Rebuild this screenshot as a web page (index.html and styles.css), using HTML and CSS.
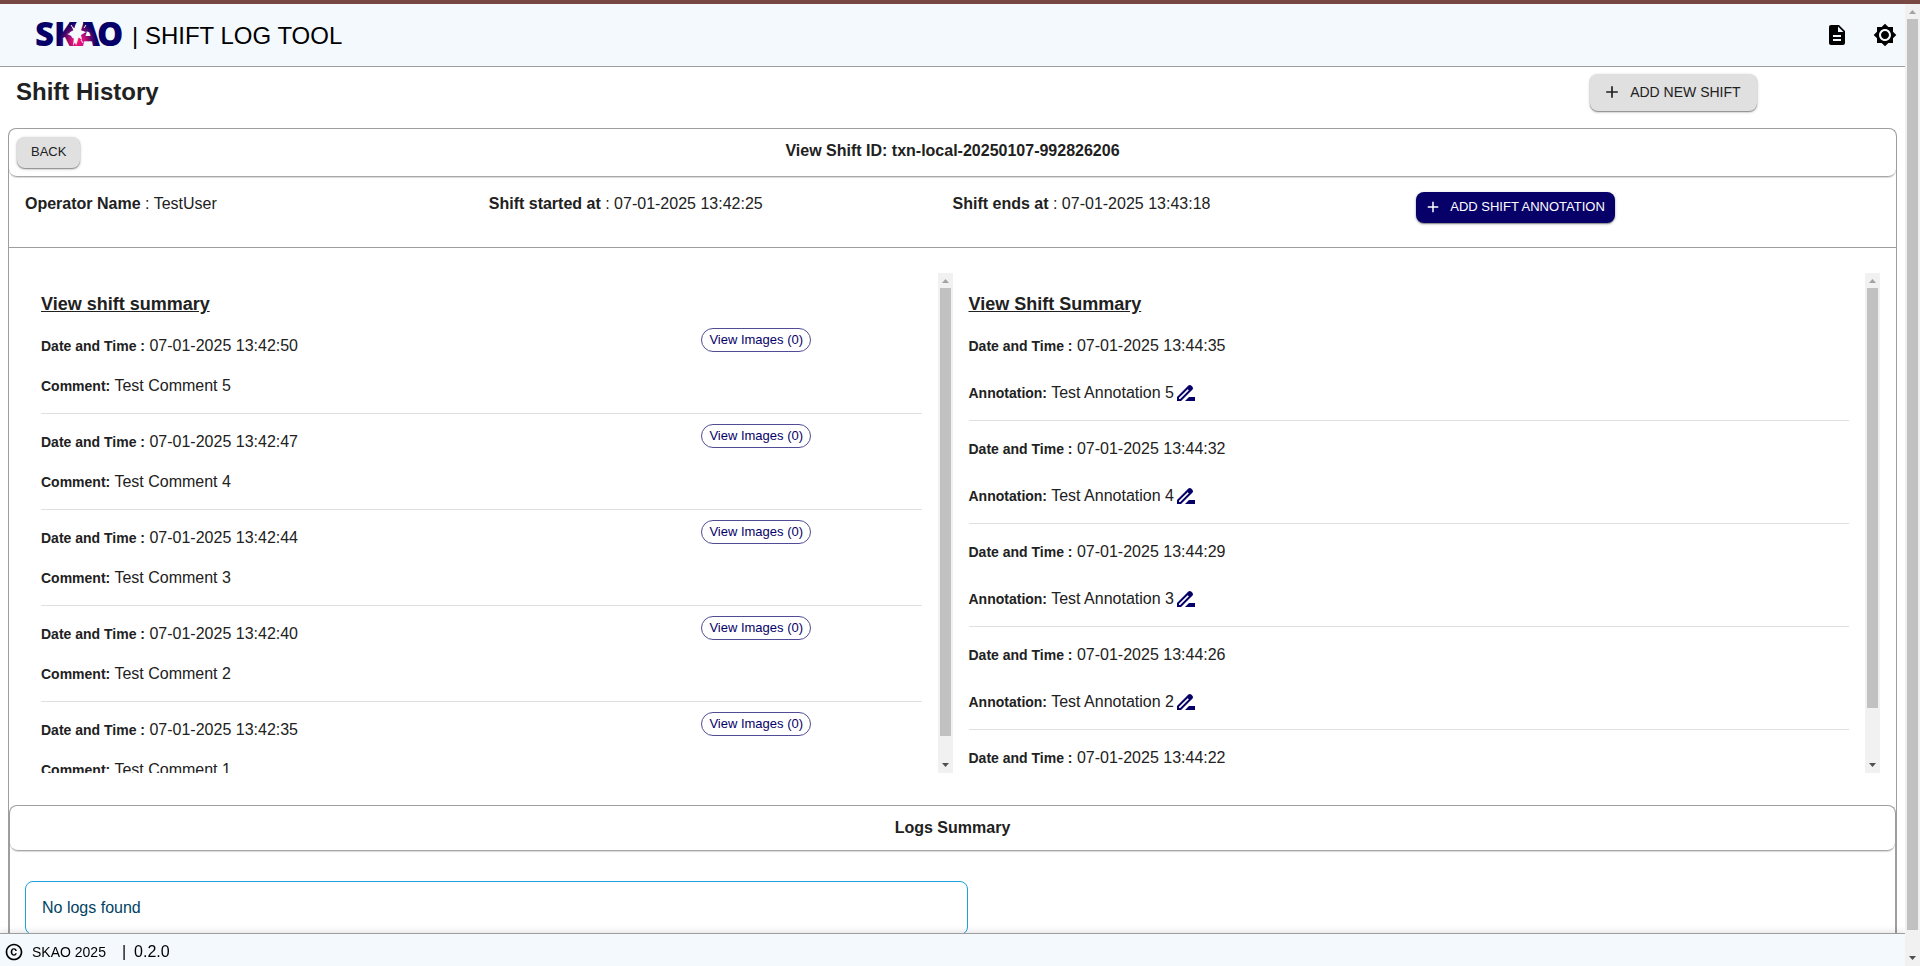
FILE: index.html
```html
<!DOCTYPE html>
<html lang="en">
<head>
<meta charset="utf-8">
<title>Shift Log Tool</title>
<link rel="stylesheet" href="styles.css">
</head>
<body>
<div class="accent"></div>
<div class="scroll-frame page">
  <div class="scroller">
    <header class="header">
      <svg class="logo" viewBox="0 0 88 26" role="img" aria-label="SKAO">
        <defs>
          <radialGradient id="burst" gradientUnits="userSpaceOnUse" cx="43" cy="20" r="19">
            <stop offset="0" stop-color="#fa1480"/>
            <stop offset="0.35" stop-color="#d50f76"/>
            <stop offset="0.7" stop-color="#5a0a6c"/>
            <stop offset="1" stop-color="#070068"/>
          </radialGradient>
        </defs>
        <g class="logo-text">
          <text x="0" y="25">S</text>
          <text x="19" y="25" fill="url(#burst)">K</text>
          <text x="41" y="25" fill="url(#burst)">A</text>
          <text x="62" y="25">O</text>
        </g>
        <path fill="url(#burst)" d="M35 1h6l-2 8-8 4zM48 1h6l4 12-7-3zM32 15l8 3-1 7h-3zM44 17l5 2-5 6h-2z"/>
        <path fill="#f4f9fd" d="M44 0l1 9 6 2-5 3 1 5-4-3-5 9 1-9-7-3 7-2-2-5 4 2z"/>
        <path stroke="#f4f9fd" fill="none" d="M36 4l2 3M51 4l-2 3M46 19l2 3"/>
      </svg>
      <span class="app-title">| SHIFT LOG TOOL</span>
      <nav class="header-actions">
        <button class="icon-button" aria-label="Documentation">
          <svg viewBox="0 0 24 24"><path d="M14 2H6c-1.100 0-1.990.9-1.990 2L4 20c0 1.100.89 2 1.990 2H18c1.100 0 2-.9 2-2V8l-6-6zm2 16H8v-2h8v2zm0-4H8v-2h8v2zm-3-5V3.500L18.500 9H13z"/></svg>
        </button>
        <button class="icon-button" aria-label="Toggle theme">
          <svg viewBox="0 0 24 24"><path d="M20 8.690V4h-4.690L12 .69 8.690 4H4v4.690L.69 12 4 15.310V20h4.690L12 23.310 15.310 20H20v-4.690L23.310 12 20 8.690zM12 18c-3.310 0-6-2.690-6-6s2.690-6 6-6 6 2.690 6 6-2.690 6-6 6zm0-10c-2.210 0-4 1.790-4 4s1.790 4 4 4 4-1.790 4-4-1.790-4-4-4z"/></svg>
        </button>
      </nav>
    </header>

    <main class="main">
      <div class="title-row">
        <h1>Shift History</h1>
        <div class="title-action">
          <button class="button button-large">
            <svg viewBox="0 0 24 24"><path d="M19 13h-6v6h-2v-6H5v-2h6V5h2v6h6v2z"/></svg>ADD NEW SHIFT</button>
        </div>
      </div>

      <section class="card">
        <div class="card-header">
          <button class="button">BACK</button>
          <h2>View Shift ID: txn-local-20250107-992826206</h2>
        </div>
        <div class="details">
          <p><b>Operator Name</b> : TestUser</p>
          <p><b>Shift started at</b> : 07-01-2025 13:42:25</p>
          <p><b>Shift ends at</b> : 07-01-2025 13:43:18</p>
          <div class="details-action">
            <button class="button button-primary">
              <svg viewBox="0 0 24 24"><path d="M19 13h-6v6h-2v-6H5v-2h6V5h2v6h6v2z"/></svg>ADD SHIFT ANNOTATION</button>
          </div>
        </div>

        <div class="panels">
          <section class="scroll-frame panel">
            <div class="scroller">
              <h3>View shift summary</h3>
              <article class="comment">
                <div class="comment-text"><p><b>Date and Time :</b> 07-01-2025 13:42:50</p><p><b>Comment:</b> Test Comment 5</p></div>
                <button class="chip">View Images (0)</button>
              </article>
              <article class="comment">
                <div class="comment-text"><p><b>Date and Time :</b> 07-01-2025 13:42:47</p><p><b>Comment:</b> Test Comment 4</p></div>
                <button class="chip">View Images (0)</button>
              </article>
              <article class="comment">
                <div class="comment-text"><p><b>Date and Time :</b> 07-01-2025 13:42:44</p><p><b>Comment:</b> Test Comment 3</p></div>
                <button class="chip">View Images (0)</button>
              </article>
              <article class="comment">
                <div class="comment-text"><p><b>Date and Time :</b> 07-01-2025 13:42:40</p><p><b>Comment:</b> Test Comment 2</p></div>
                <button class="chip">View Images (0)</button>
              </article>
              <article class="comment">
                <div class="comment-text"><p><b>Date and Time :</b> 07-01-2025 13:42:35</p><p><b>Comment:</b> Test Comment 1</p></div>
                <button class="chip">View Images (0)</button>
              </article>
            </div>
            <div class="scrollbar" aria-hidden="true">
              <svg viewBox="0 0 15 15"><use href="#arrow-up"/></svg>
              <div class="track"><div class="thumb" style="height: 95.3%"></div></div>
              <svg viewBox="0 0 15 15"><use href="#arrow-down"/></svg>
            </div>
          </section>

          <section class="scroll-frame panel">
            <div class="scroller">
              <h3>View Shift Summary</h3>
              <article class="annotation">
                <p><b>Date and Time :</b> 07-01-2025 13:44:35</p>
                <div class="annotation-row"><p><b>Annotation:</b> Test Annotation 5</p><button class="edit" aria-label="Edit annotation 5"><svg viewBox="0 0 24 24"><use href="#pencil"/></svg></button></div>
              </article>
              <article class="annotation">
                <p><b>Date and Time :</b> 07-01-2025 13:44:32</p>
                <div class="annotation-row"><p><b>Annotation:</b> Test Annotation 4</p><button class="edit" aria-label="Edit annotation 4"><svg viewBox="0 0 24 24"><use href="#pencil"/></svg></button></div>
              </article>
              <article class="annotation">
                <p><b>Date and Time :</b> 07-01-2025 13:44:29</p>
                <div class="annotation-row"><p><b>Annotation:</b> Test Annotation 3</p><button class="edit" aria-label="Edit annotation 3"><svg viewBox="0 0 24 24"><use href="#pencil"/></svg></button></div>
              </article>
              <article class="annotation">
                <p><b>Date and Time :</b> 07-01-2025 13:44:26</p>
                <div class="annotation-row"><p><b>Annotation:</b> Test Annotation 2</p><button class="edit" aria-label="Edit annotation 2"><svg viewBox="0 0 24 24"><use href="#pencil"/></svg></button></div>
              </article>
              <article class="annotation">
                <p><b>Date and Time :</b> 07-01-2025 13:44:22</p>
                <div class="annotation-row"><p><b>Annotation:</b> Test Annotation 1</p><button class="edit" aria-label="Edit annotation 1"><svg viewBox="0 0 24 24"><use href="#pencil"/></svg></button></div>
              </article>
            </div>
            <div class="scrollbar" aria-hidden="true">
              <svg viewBox="0 0 15 15"><use href="#arrow-up"/></svg>
              <div class="track"><div class="thumb" style="height: 89.3%"></div></div>
              <svg viewBox="0 0 15 15"><use href="#arrow-down"/></svg>
            </div>
          </section>
        </div>

        <section class="logs">
          <div class="logs-header"><h2>Logs Summary</h2></div>
          <div class="alert">No logs found</div>
        </section>
      </section>
    </main>

    <footer class="footer">
      <svg viewBox="0 0 24 24"><path d="M11.880 9.140c1.280.06 1.610 1.150 1.630 1.660h1.790c-.08-1.980-1.490-3.190-3.450-3.190C9.640 7.610 8 9 8 12.140c0 1.940.93 4.240 3.840 4.240 2.220 0 3.410-1.650 3.440-2.950h-1.790c-.03.59-.45 1.380-1.630 1.440-1.310-.04-1.860-1.060-1.860-2.730 0-2.890 1.280-2.980 1.880-3zM12 2C6.480 2 2 6.480 2 12s4.480 10 10 10 10-4.480 10-10S17.520 2 12 2zm0 18c-4.410 0-8-3.590-8-8s3.590-8 8-8 8 3.590 8 8-3.590 8-8 8z"/></svg>
      <span class="copyright">SKAO 2025</span>
      <span class="divider">|</span>
      <span class="version">0.2.0</span>
    </footer>
  </div>
  <div class="scrollbar" aria-hidden="true">
    <svg viewBox="0 0 15 15"><use href="#arrow-up"/></svg>
    <div class="track"><div class="thumb" style="height: 97.7%"></div></div>
    <svg viewBox="0 0 15 15"><use href="#arrow-down"/></svg>
  </div>
</div>

<svg class="symbols" aria-hidden="true">
  <symbol id="pencil" viewBox="0 0 24 24"><path d="M18.410 5.800 17.200 4.590c-.78-.78-2.050-.78-2.830 0l-2.680 2.680L3 15.960V20h4.040l8.740-8.740 2.630-2.630c.79-.78.79-2.050 0-2.830zM6.210 18H5v-1.210l8.660-8.660 1.210 1.210L6.210 18zM11 20l4-4h6v4H11z"/></symbol>
  <symbol id="arrow-up" viewBox="0 0 15 15"><path fill="#a3a3a3" d="M4 10l3.500-4 3.500 4z"/></symbol>
  <symbol id="arrow-down" viewBox="0 0 15 15"><path fill="#505050" d="M4 5l3.500 4L11 5z"/></symbol>
</svg>
</body>
</html>
```
FILE: styles.css
```css
* {
  box-sizing: border-box;
}

body {
  margin: 0;
  height: 100vh;
  display: flex;
  flex-direction: column;
  overflow: hidden;
  background: #fff;
  color: #212121;
  font: 16px/24px "Liberation Sans", Arial, sans-serif;
}

h1,
h2,
h3,
p {
  margin: 0;
}

button {
  font-family: inherit;
  cursor: pointer;
}

.symbols {
  display: none;
}

.accent {
  flex: none;
  height: 4px;
  background: #784843;
}

/* Scrolling areas */
.scroll-frame {
  display: flex;
}

.scroller {
  flex: 1;
  min-width: 0;
  overflow-y: scroll;
  scrollbar-width: none;
}

.scrollbar {
  display: flex;
  flex: none;
  flex-direction: column;
  width: 15px;
  background: #f1f1f1;
}

.scrollbar svg {
  flex: none;
  width: 15px;
  height: 15px;
}

.track {
  flex: 1;
  padding: 0 2px;
}

.thumb {
  background: #c1c1c1;
}

/* Page frame */
.page {
  flex: 1;
  min-height: 0;
}

.header {
  position: sticky;
  top: 0;
  z-index: 2;
  display: flex;
  align-items: center;
  height: 63px;
  padding: 0 0 0 35px;
  background: #f4f9fd;
  border-bottom: 1px solid #9e9e9e;
  color: #000;
}

.logo {
  width: 88px;
  height: 26px;
  margin: 0 9px 2px 0;
  overflow: visible;
}

.logo-text {
  font: 800 33px "Open Sans", "Liberation Sans", sans-serif;
  fill: #070068;
}

.app-title {
  font-size: 24px;
  line-height: 32px;
  padding-top: 2px;
}

.header-actions {
  display: flex;
  gap: 8px;
  margin-left: auto;
}

.icon-button {
  display: flex;
  padding: 8px;
  border: 0;
  background: none;
}

.icon-button svg {
  width: 24px;
  height: 24px;
}

.main {
  padding: 7px 8px 0;
}

.title-row {
  display: grid;
  grid-template-columns: 5fr 1fr;
  height: 54px;
}

h1 {
  padding-left: 8px;
  font-size: 24px;
  line-height: 36px;
}

.title-action {
  padding-left: 8px;
}

/* Buttons */
.button {
  display: inline-flex;
  align-items: center;
  gap: 8px;
  height: 31px;
  padding: 0 14px 2px;
  border: 0;
  border-radius: 8px;
  background: #e0e0e0;
  box-shadow: 0 1px 3px rgba(0, 0, 0, 0.3), 0 1px 1px rgba(0, 0, 0, 0.3);
  color: #212121;
  font-size: 13px;
}

.button svg {
  width: 18px;
  height: 18px;
  fill: currentColor;
}

.button-large {
  height: 37px;
  padding: 0 16px 2px 12px;
  font-size: 14px;
}

.button-large svg {
  width: 20px;
  height: 20px;
}

.button-primary {
  padding: 0 10px 2px 8px;
  background: #070068;
  color: #fff;
}

/* Shift card */
.card {
  border: solid #9e9e9e;
  border-width: 1px 1px 0;
  border-radius: 8px 8px 0 0;
}

.card-header {
  display: grid;
  grid-template-columns: 1fr auto 1fr;
  align-items: start;
  justify-items: start;
  height: 48px;
  padding: 8px;
  border-bottom: 1px solid #a8a8a8;
  border-radius: 8px;
  box-shadow: 0 1px 1px rgba(0, 0, 0, 0.15);
}

h2 {
  font-size: 16px;
  line-height: 28px;
}

.details {
  display: grid;
  grid-template-columns: repeat(4, 1fr);
  height: 71px;
  padding: 15px 16px 0;
  border-bottom: 1px solid #9e9e9e;
}

.panels {
  display: grid;
  grid-template-columns: 1fr 1fr;
  padding: 25px 16px 32px;
}

.panel {
  height: 500px;
}

.panel .scroller {
  padding: 16px 16px 0;
}

h3 {
  font-size: 18px;
  line-height: 30px;
  margin-bottom: -1px;
  text-decoration: underline;
}

.panel b {
  font-size: 14px;
}

.comment {
  display: flex;
  align-items: flex-start;
  padding: 10px 0 15px;
  border-bottom: 1px solid #e0e0e0;
}

.comment-text {
  display: grid;
  flex: 0 0 75%;
  gap: 16px;
  padding-top: 6px;
}

.chip {
  height: 24px;
  padding: 0 7px 1px;
  border: 1px solid #514d95;
  border-radius: 12px;
  background: #fff;
  color: #070068;
  font-size: 13px;
}

.annotation {
  display: grid;
  gap: 23px;
  padding: 16px 0 15px;
  border-bottom: 1px solid #e0e0e0;
}

.annotation-row {
  display: flex;
}

.edit {
  display: flex;
  padding: 0;
  border: 0;
  background: none;
}

.edit svg {
  width: 24px;
  height: 24px;
  fill: #070068;
}

/* Logs */
.logs {
  padding-bottom: 20px;
  border: solid #9e9e9e;
  border-width: 1px 1px 0;
  border-radius: 8px 8px 0 0;
}

.logs-header {
  height: 45px;
  padding-top: 8px;
  border-bottom: 1px solid #a8a8a8;
  border-radius: 8px;
  box-shadow: 0 1px 1px rgba(0, 0, 0, 0.15);
  text-align: center;
}

.alert {
  width: 50%;
  margin: 30px 15px 0;
  padding: 14px 16px;
  border: 1px solid #1a9fe0;
  border-radius: 8px;
  color: #014361;
}

.footer {
  position: sticky;
  bottom: 0;
  z-index: 2;
  display: flex;
  align-items: center;
  height: 33px;
  padding: 3px 0 0 4px;
  border-top: 1px solid #9e9e9e;
  background: #f4f9fd;
  box-shadow: 0 -2px 6px rgba(0, 0, 0, 0.1);
  color: #000;
}

.footer svg {
  width: 20px;
  height: 20px;
}

.copyright {
  margin: 0 16px 0 8px;
  font-size: 14px;
}

.version {
  margin-left: 8px;
}
```
